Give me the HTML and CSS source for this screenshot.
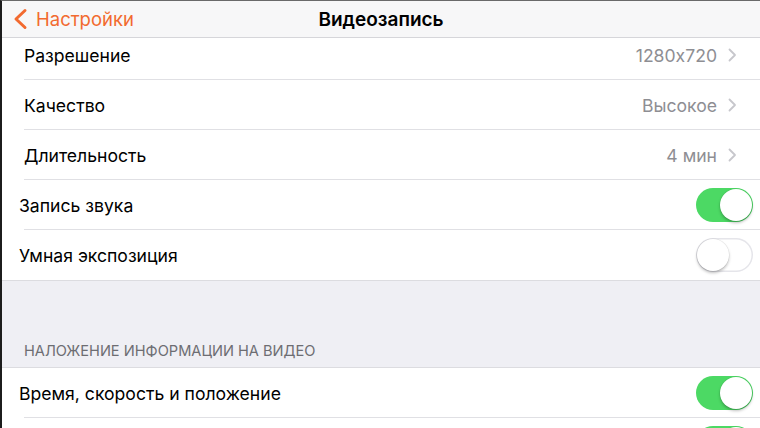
FILE: index.html
```html
<!DOCTYPE html>
<html lang="ru">
<head>
<meta charset="utf-8">
<link rel="stylesheet" href="styles.css">
</head>
<body>
<div class="screen">
  <header class="nav">
    <div class="back">
      <svg class="back-chev" width="16" height="22" viewBox="0 0 16 22"><path d="M13 2.5 L4 11 L13 19.5" fill="none" stroke="#f26a2f" stroke-width="3" stroke-linecap="round" stroke-linejoin="round"/></svg>
      <span>Настройки</span>
    </div>
    <div class="title">Видеозапись</div>
  </header>
  <main class="content">
    <section class="group first">
      <div class="row inset">
        <span class="label">Разрешение</span>
        <span class="value">1280x720</span>
        <svg class="chev" width="9" height="14" viewBox="0 0 9 14"><path d="M1.5 1.5 L7 7 L1.5 12.5" fill="none" stroke="#c7c7cc" stroke-width="1.8" stroke-linecap="round" stroke-linejoin="round"/></svg>
      </div>
      <div class="row inset">
        <span class="label">Качество</span>
        <span class="value">Высокое</span>
        <svg class="chev" width="9" height="14" viewBox="0 0 9 14"><path d="M1.5 1.5 L7 7 L1.5 12.5" fill="none" stroke="#c7c7cc" stroke-width="1.8" stroke-linecap="round" stroke-linejoin="round"/></svg>
      </div>
      <div class="row inset">
        <span class="label">Длительность</span>
        <span class="value">4 мин</span>
        <svg class="chev" width="9" height="14" viewBox="0 0 9 14"><path d="M1.5 1.5 L7 7 L1.5 12.5" fill="none" stroke="#c7c7cc" stroke-width="1.8" stroke-linecap="round" stroke-linejoin="round"/></svg>
      </div>
      <div class="row">
        <span class="label">Запись звука</span>
        <span class="toggle on"><span class="knob"></span></span>
      </div>
      <div class="row last">
        <span class="label">Умная экспозиция</span>
        <span class="toggle off"><span class="knob"></span></span>
      </div>
    </section>
    <div class="section-header">НАЛОЖЕНИЕ ИНФОРМАЦИИ НА ВИДЕО</div>
    <section class="group">
      <div class="row">
        <span class="label">Время, скорость и положение</span>
        <span class="toggle on"><span class="knob"></span></span>
      </div>
      <div class="row">
        <span class="label"></span>
        <span class="toggle on"><span class="knob"></span></span>
      </div>
    </section>
  </main>
</div>
</body>
</html>
```
FILE: styles.css
```css
* { box-sizing: border-box; }
html, body { margin: 0; padding: 0; }
body {
  width: 760px;
  height: 428px;
  overflow: hidden;
  font-family: "Inter", "Roboto", "Noto Sans", sans-serif;
  font-feature-settings: "calt" 0;
  background: #efeff4;
}
.screen {
  width: 760px;
  height: 428px;
  overflow: hidden;
  display: flex;
  flex-direction: column;
  border-left: 2px solid #1c1c1c;
  border-top: 1px solid #6a6a6a;
  background: #efeff4;
}
.nav {
  flex: 0 0 37px;
  position: relative;
  background: #f7f7f8;
  border-bottom: 1px solid #d6d6da;
  display: flex;
  align-items: center;
  z-index: 2;
}
.back {
  display: flex;
  align-items: center;
  padding-left: 10px;
  color: #f26a2f;
  font-size: 18.5px;
  gap: 8px;
}
.title {
  position: absolute;
  left: 0;
  right: 0;
  text-align: center;
  font-weight: 600;
  font-size: 19px;
  color: #000;
  pointer-events: none;
}
.content {
  flex: 1;
  overflow: hidden;
}
.group {
  background: #fff;
  border-bottom: 1px solid #dcdce0;
}
.group.first { margin-top: -8px; }
.section-header {
  height: 87px;
  display: flex;
  align-items: flex-end;
  padding: 0 0 7px 22px;
  font-size: 14.6px;
  color: #6d6d72;
  border-bottom: 1px solid #dcdce0;
}
.row {
  height: 50px;
  display: flex;
  align-items: center;
  padding: 0 7px 0 17px;
  position: relative;
  font-size: 17.6px;
  color: #000;
}
.row.inset { padding-left: 22px; }
.row::after {
  content: "";
  position: absolute;
  left: 22px;
  right: 0;
  bottom: 0;
  border-bottom: 1px solid #e0e0e4;
}
.row.last::after { display: none; }
.label { flex: 1; }
.value {
  color: #8e8e93;
  margin-right: 11px;
}
.chev { margin-right: 16px; }
.toggle {
  width: 57px;
  height: 34px;
  border-radius: 17px;
  position: relative;
  flex: 0 0 auto;
}
.toggle.on { background: #4cd964; }
.toggle.off { background: #fff; box-shadow: inset 0 0 0 1.5px #e5e5ea; }
.knob {
  position: absolute;
  top: 1px;
  width: 32px;
  height: 32px;
  border-radius: 50%;
  background: #fff;
  box-shadow: 0 2px 3px rgba(0,0,0,0.25), 0 0 0 0.5px rgba(0,0,0,0.08);
}
.toggle.on .knob { left: 24px; }
.toggle.off .knob { left: 1px; }
```
